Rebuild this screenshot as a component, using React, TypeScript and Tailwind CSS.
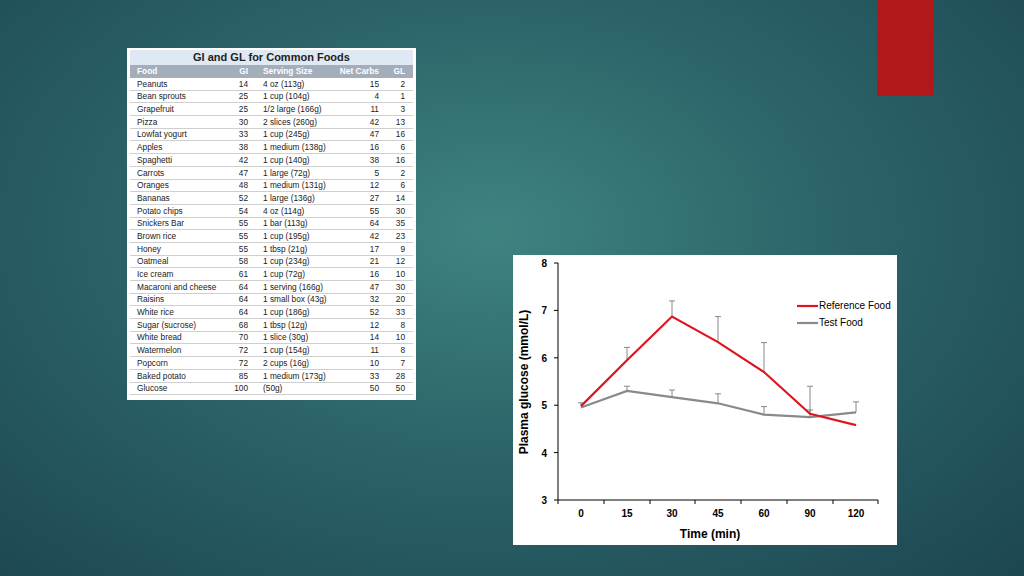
const rows: [string, string, string, string, string][] = [
  ["Peanuts","14","4 oz (113g)","15","2"],
  ["Bean sprouts","25","1 cup (104g)","4","1"],
  ["Grapefruit","25","1/2 large (166g)","11","3"],
  ["Pizza","30","2 slices (260g)","42","13"],
  ["Lowfat yogurt","33","1 cup (245g)","47","16"],
  ["Apples","38","1 medium (138g)","16","6"],
  ["Spaghetti","42","1 cup (140g)","38","16"],
  ["Carrots","47","1 large (72g)","5","2"],
  ["Oranges","48","1 medium (131g)","12","6"],
  ["Bananas","52","1 large (136g)","27","14"],
  ["Potato chips","54","4 oz (114g)","55","30"],
  ["Snickers Bar","55","1 bar (113g)","64","35"],
  ["Brown rice","55","1 cup (195g)","42","23"],
  ["Honey","55","1 tbsp (21g)","17","9"],
  ["Oatmeal","58","1 cup (234g)","21","12"],
  ["Ice cream","61","1 cup (72g)","16","10"],
  ["Macaroni and cheese","64","1 serving (166g)","47","30"],
  ["Raisins","64","1 small box (43g)","32","20"],
  ["White rice","64","1 cup (186g)","52","33"],
  ["Sugar (sucrose)","68","1 tbsp (12g)","12","8"],
  ["White bread","70","1 slice (30g)","14","10"],
  ["Watermelon","72","1 cup (154g)","11","8"],
  ["Popcorn","72","2 cups (16g)","10","7"],
  ["Baked potato","85","1 medium (173g)","33","28"],
  ["Glucose","100","(50g)","50","50"],
];

const xs = [68, 114, 159, 205, 251, 297, 343];
const yp = (v: number) => 245 - (v - 3) * 47.4;
const red = [4.98, 5.95, 6.87, 6.33, 5.7, 4.82, 4.58];
const gray = [4.95, 5.3, 5.17, 5.04, 4.8, 4.75, 4.85];
const redErr = [5.05, 6.22, 7.2, 6.87, 6.32, 5.4, 4.58];
const grayErr = [4.95, 5.4, 5.32, 5.24, 4.97, 4.9, 5.07];

function Chart() {
  const pts = (a: number[]) => a.map((v, i) => `${xs[i]},${yp(v)}`).join(" ");
  return (
    <svg width="384" height="290" viewBox="0 0 384 290" style={{ fontFamily: "Liberation Sans, Arial, sans-serif" }}>
      <rect width="384" height="290" fill="#fff" />
      {redErr.map((v, i) => v > red[i] ? (
        <g key={"r" + i} stroke="#888" strokeWidth="1">
          <line x1={xs[i]} x2={xs[i]} y1={yp(red[i])} y2={yp(v)} />
          <line x1={xs[i] - 3} x2={xs[i] + 3} y1={yp(v)} y2={yp(v)} />
        </g>) : null)}
      {grayErr.map((v, i) => v > gray[i] ? (
        <g key={"g" + i} stroke="#888" strokeWidth="1">
          <line x1={xs[i]} x2={xs[i]} y1={yp(gray[i])} y2={yp(v)} />
          <line x1={xs[i] - 3} x2={xs[i] + 3} y1={yp(v)} y2={yp(v)} />
        </g>) : null)}
      <polyline points={pts(gray)} fill="none" stroke="#8a8a8a" strokeWidth="2.2" />
      <polyline points={pts(red)} fill="none" stroke="#e0141e" strokeWidth="2.2" />
      <line x1="45" x2="45" y1="8" y2="245" stroke="#000" />
      <line x1="45" x2="365" y1="245" y2="245" stroke="#000" />
      {[3, 4, 5, 6, 7, 8].map(v => (
        <g key={v}>
          <line x1="41" x2="45" y1={yp(v)} y2={yp(v)} stroke="#000" />
          <text x="34" y={yp(v) + 4} fontSize="10" fontWeight="bold" textAnchor="end">{v}</text>
        </g>
      ))}
      {[45, 91, 137, 182, 228, 274, 320, 365].map(x => (
        <line key={x} x1={x} x2={x} y1="245" y2="249" stroke="#000" />
      ))}
      {["0", "15", "30", "45", "60", "90", "120"].map((t, i) => (
        <text key={t} x={xs[i]} y="262" fontSize="10" fontWeight="bold" textAnchor="middle">{t}</text>
      ))}
      <text x="197" y="283" fontSize="12" fontWeight="bold" textAnchor="middle">Time (min)</text>
      <text transform="translate(15,127) rotate(-90)" fontSize="12" fontWeight="bold" textAnchor="middle">Plasma glucose (mmol/L)</text>
      <line x1="284" x2="305" y1="51" y2="51" stroke="#e0141e" strokeWidth="2.2" />
      <text x="306" y="54" fontSize="10">Reference Food</text>
      <line x1="284" x2="305" y1="68" y2="68" stroke="#8a8a8a" strokeWidth="2.2" />
      <text x="306" y="71" fontSize="10">Test Food</text>
    </svg>
  );
}

export default function App() {
  return (
    <div className="relative w-[1024px] h-[576px] overflow-hidden"
      style={{ background: "radial-gradient(ellipse at 48% 40%, #3f8381 0%, #2c6469 45%, #1c4652 100%)" }}>
      <div className="absolute left-[877px] top-0 w-[57px] h-[96px] bg-[#b0191a]" />
      <div className="absolute left-[127px] top-[48px] w-[289px] h-[352px] bg-white px-[3px] pt-[2px] text-[8.3px] leading-none text-black"
        style={{ fontFamily: "Liberation Sans, Arial, sans-serif" }}>
        <div className="h-[15px] bg-[#dfe9f3] flex items-center justify-center text-[11px] font-bold text-[#222]">GI and GL for Common Foods</div>
        <div className="h-[13px] bg-[#a4adba] text-white font-bold flex items-center whitespace-nowrap">
          <div className="w-[90px] pl-[7px]">Food</div>
          <div className="w-[28px] text-right">GI</div>
          <div className="w-[100px] pl-[15px]">Serving Size</div>
          <div className="w-[31px] flex justify-end"><span>Net Carbs</span></div>
          <div className="w-[26px] text-right">GL</div>
        </div>
        {rows.map(r => (
          <div key={r[0]} className="h-[12.7px] flex items-center border-b border-[#cfcfcf] text-[#222] whitespace-nowrap">
            <div className="w-[90px] pl-[7px]">{r[0]}</div>
            <div className="w-[28px] text-right">{r[1]}</div>
            <div className="w-[100px] pl-[15px]">{r[2]}</div>
            <div className="w-[31px] text-right">{r[3]}</div>
            <div className="w-[26px] text-right">{r[4]}</div>
          </div>
        ))}
      </div>
      <div className="absolute left-[513px] top-[255px]">
        <Chart />
      </div>
    </div>
  );
}
